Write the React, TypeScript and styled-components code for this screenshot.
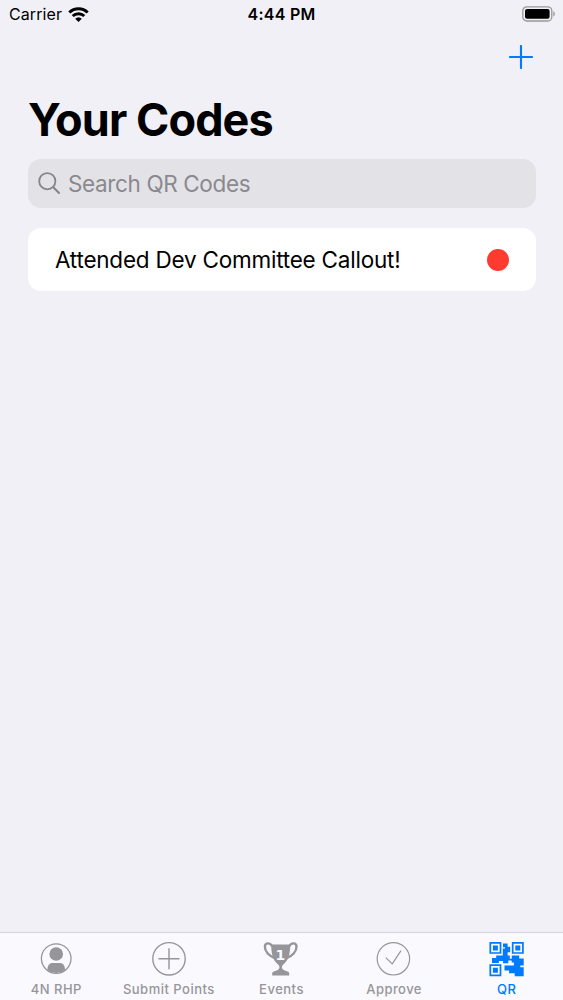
import styled, { createGlobalStyle } from "styled-components";

interface TextProps {
  $spacing: number;
}

const WifiIcon = () => (
  <svg width="21" height="16" viewBox="0 0 21 16" fill="none">
    <g stroke="#000" strokeWidth="2.9">
      <path d="M1.3 5.5a13.1 13.1 0 0 1 18.4 0" />
      <path d="M4.7 9a8.4 8.4 0 0 1 11.6 0" />
    </g>
    <path d="M7.2 11.8a4.8 4.8 0 0 1 6.6 0l-3.3 3.3z" fill="#000" />
  </svg>
);

const BatteryIcon = () => (
  <svg width="34" height="16" viewBox="0 0 34 16">
    <rect x="0.8" y="0.8" width="29" height="14.2" rx="4" fill="none" stroke="#98979c" strokeWidth="1.3" />
    <rect x="3" y="3" width="24.6" height="9.8" rx="2" fill="#000" />
    <path d="M31.3 5.3c2 .8 2 4.4 0 5.2z" fill="#98979c" />
  </svg>
);

const PlusIcon = () => (
  <svg width="24" height="24" viewBox="0 0 24 24" stroke="#007aff" strokeWidth="2.1" strokeLinecap="round">
    <path d="M12 1v22M1 12h22" />
  </svg>
);

const SearchIcon = () => (
  <svg width="23" height="23" viewBox="0 0 23 23" fill="none" stroke="#85858a" strokeLinecap="round">
    <circle cx="9.3" cy="9.2" r="8.1" strokeWidth="1.8" />
    <path d="M15.3 15.3l5.7 5.6" strokeWidth="2.1" />
  </svg>
);

const PersonIcon = () => (
  <svg width="36" height="36" viewBox="0 0 36 36">
    <circle cx="18.2" cy="17.6" r="14.8" fill="none" stroke="currentColor" strokeWidth="1.3" />
    <circle cx="18.2" cy="13" r="6.8" fill="currentColor" />
    <path d="M9.4 29.1c0-4.7 2-7.2 5.2-7.2h7.2c3.2 0 5.2 2.5 5.2 7.2a14.8 14.8 0 0 1-17.6 0z" fill="currentColor" />
  </svg>
);

const PlusCircleIcon = () => (
  <svg width="36" height="36" viewBox="0 0 36 36" fill="none" stroke="currentColor">
    <circle cx="18" cy="17.8" r="16.2" strokeWidth="1.4" />
    <path d="M18 7.3v21M7.5 17.8h21" strokeWidth="1.4" />
  </svg>
);

const TrophyIcon = () => (
  <svg width="36" height="36" viewBox="0 0 36 36">
    <g fill="none" stroke="currentColor" strokeWidth="2.4">
      <path d="M9 5.2C7.4 1.4 2 1.3 1.9 5.6c-.2 4.9 4.3 9.6 10.4 11.8" />
      <path d="M26.4 5.2c1.6-3.8 7-3.9 7.1.4.2 4.9-4.3 9.6-10.4 11.8" />
    </g>
    <path
      d="M8.2 3.6h19c0 8.6-1.4 15.3-6 19.1-1.9 1.5-2.4 2.7-2.2 4.3.3 1.6 2.5 2.6 5.6 3.5 1 .3 1.6 1 1.6 2v2H9.2v-2c0-1 .6-1.7 1.6-2 3.1-.9 5.3-1.9 5.6-3.5.2-1.6-.3-2.8-2.2-4.3-4.6-3.8-6-10.5-6-19.1z"
      fill="currentColor"
    />
    <TrophyNumber x="17.4" y="19">1</TrophyNumber>
  </svg>
);

const CheckCircleIcon = () => (
  <svg width="36" height="36" viewBox="0 0 36 36" fill="none" stroke="currentColor">
    <circle cx="17.4" cy="17.8" r="16.2" strokeWidth="1.2" />
    <path d="M9.7 16.6l6.6 6.3 8.7-13.2" strokeWidth="1.2" />
  </svg>
);

const QrIcon = () => (
  <svg width="36" height="36" viewBox="0 0 36 36">
    <g fill="none" stroke="currentColor" strokeWidth="1.7">
      <path d="M1.3 1.8h10.2v10.2H1.3zM23.7 1.8h10.2v10.2H23.7zM1.3 24.2h10.2v10.2H1.3z" />
    </g>
    <path
      fill="currentColor"
      d="M3.9 4.4h5v5h-5zM26.3 4.4h5v5h-5zM3.9 26.8h5v5h-5z
      M14 2.4h4.6v3.4h2.6v5.4h-2.6v3.2h2.2v3.4h2v-3.2h7.4v2.8h4.5v7.2h-3.4v1.6h3.4v9h-9v-3h-5.6v-2.8h-4.6v-5h9.4v-2.8h-2.2v-2h-3.4v2.6h-5.2v-2.2h-4.2v2H3v-5h4.2v-2.4h6.6V7.4h2.2V6.2H14z"
    />
  </svg>
);

const tabs = [
  { label: "4N RHP", icon: <PersonIcon />, spacing: 0.5 },
  { label: "Submit Points", icon: <PlusCircleIcon />, spacing: 0.5 },
  { label: "Events", icon: <TrophyIcon />, spacing: 0.5 },
  { label: "Approve", icon: <CheckCircleIcon />, spacing: 0.45 },
  { label: "QR", icon: <QrIcon />, spacing: 0.4 },
];

const App = () => {
  return (
    <>
      <GlobalStyle />
      <Screen>
        <StatusBar>
          <Carrier>
            Carrier
            <WifiIcon />
          </Carrier>
          <Clock>4:44 PM</Clock>
          <Battery>
            <BatteryIcon />
          </Battery>
        </StatusBar>
        <NavBar>
          <AddBtn aria-label="Add">
            <PlusIcon />
          </AddBtn>
        </NavBar>
        <Title>Your Codes</Title>
        <SearchBar>
          <SearchIcon />
          <Placeholder>Search QR Codes</Placeholder>
        </SearchBar>
        <CodeList>
          <CodeRow>
            <CodeName>Attended Dev Committee Callout!</CodeName>
            <StatusDot />
          </CodeRow>
        </CodeList>
        <TabBar>
          {tabs.map((tab) => (
            <Tab key={tab.label} $active={tab.label === "QR"}>
              {tab.icon}
              <TabLabel $spacing={tab.spacing}>{tab.label}</TabLabel>
            </Tab>
          ))}
        </TabBar>
      </Screen>
    </>
  );
};

export default App;

const GlobalStyle = createGlobalStyle`
  * {
    box-sizing: border-box;
  }
  body {
    margin: 0;
    font-family: Inter, "Liberation Sans", sans-serif;
    background-color: #f1f0f6;
  }
  svg {
    display: block;
    flex-shrink: 0;
  }
`;
const Screen = styled.div`
  height: 1000px;
  display: flex;
  flex-direction: column;
  background-color: #f1f0f6;
  color: #000;
`;
const StatusBar = styled.header`
  height: 28px;
  padding: 0 7px 0 9px;
  display: grid;
  grid-template-columns: 1fr auto 1fr;
  align-items: center;
  font-size: 16px;
  line-height: 29px;
`;
const Carrier = styled.div`
  display: flex;
  align-items: center;
  gap: 6px;
  letter-spacing: 0.1px;
`;
const Clock = styled.div`
  margin-right: 2px;
  font-weight: 600;
  letter-spacing: 0.25px;
`;
const Battery = styled.div`
  padding-bottom: 1px;
  display: flex;
  justify-content: flex-end;
`;
const NavBar = styled.nav`
  height: 60px;
  padding: 17px 30px 0 0;
  display: flex;
  justify-content: flex-end;
  align-items: flex-start;
`;
const AddBtn = styled.button`
  padding: 0;
  border: none;
  background: none;
`;
const Title = styled.h1`
  height: 71px;
  margin: 0;
  padding-left: 28px;
  font-size: 45px;
  font-weight: 700;
  line-height: 64px;
  letter-spacing: -0.9px;
  white-space: nowrap;
`;
const SearchBar = styled.div`
  height: 49px;
  margin: 0 27px 0 28px;
  padding-left: 10px;
  display: flex;
  align-items: center;
  gap: 7px;
  border-radius: 13px;
  background-color: #e3e2e7;
`;
const Placeholder = styled.span`
  color: #8a898e;
  font-size: 22.5px;
  line-height: 28px;
  letter-spacing: -0.37px;
  white-space: nowrap;
`;
const CodeList = styled.main`
  flex: 1;
  padding: 20px 27px 0 28px;
`;
const CodeRow = styled.div`
  height: 63px;
  padding: 0 27px;
  display: flex;
  align-items: center;
  justify-content: space-between;
  border-radius: 13px;
  background-color: #fff;
`;
const CodeName = styled.span`
  font-size: 22.5px;
  letter-spacing: -0.22px;
  white-space: nowrap;
`;
const StatusDot = styled.span`
  width: 22px;
  height: 22px;
  border-radius: 50%;
  background-color: #ff3b30;
`;
const TabBar = styled.footer`
  height: 68px;
  display: grid;
  grid-template-columns: repeat(5, 1fr);
  border-top: 1px solid #d5d4da;
  background-color: #faf9fe;
`;
const Tab = styled.div<{ $active?: boolean }>`
  padding-top: 8px;
  display: flex;
  flex-direction: column;
  align-items: center;
  color: ${({ $active }) => ($active ? "#007aff" : "#96959a")};
`;
const TabLabel = styled.span<TextProps>`
  margin-top: 3px;
  font-size: 13px;
  font-weight: 500;
  line-height: 18px;
  letter-spacing: ${({ $spacing }) => $spacing}px;
  white-space: nowrap;
`;
const TrophyNumber = styled.text`
  fill: #faf9fe;
  font-family: "DejaVu Sans", sans-serif;
  font-size: 14px;
  font-weight: 700;
  text-anchor: middle;
`;
